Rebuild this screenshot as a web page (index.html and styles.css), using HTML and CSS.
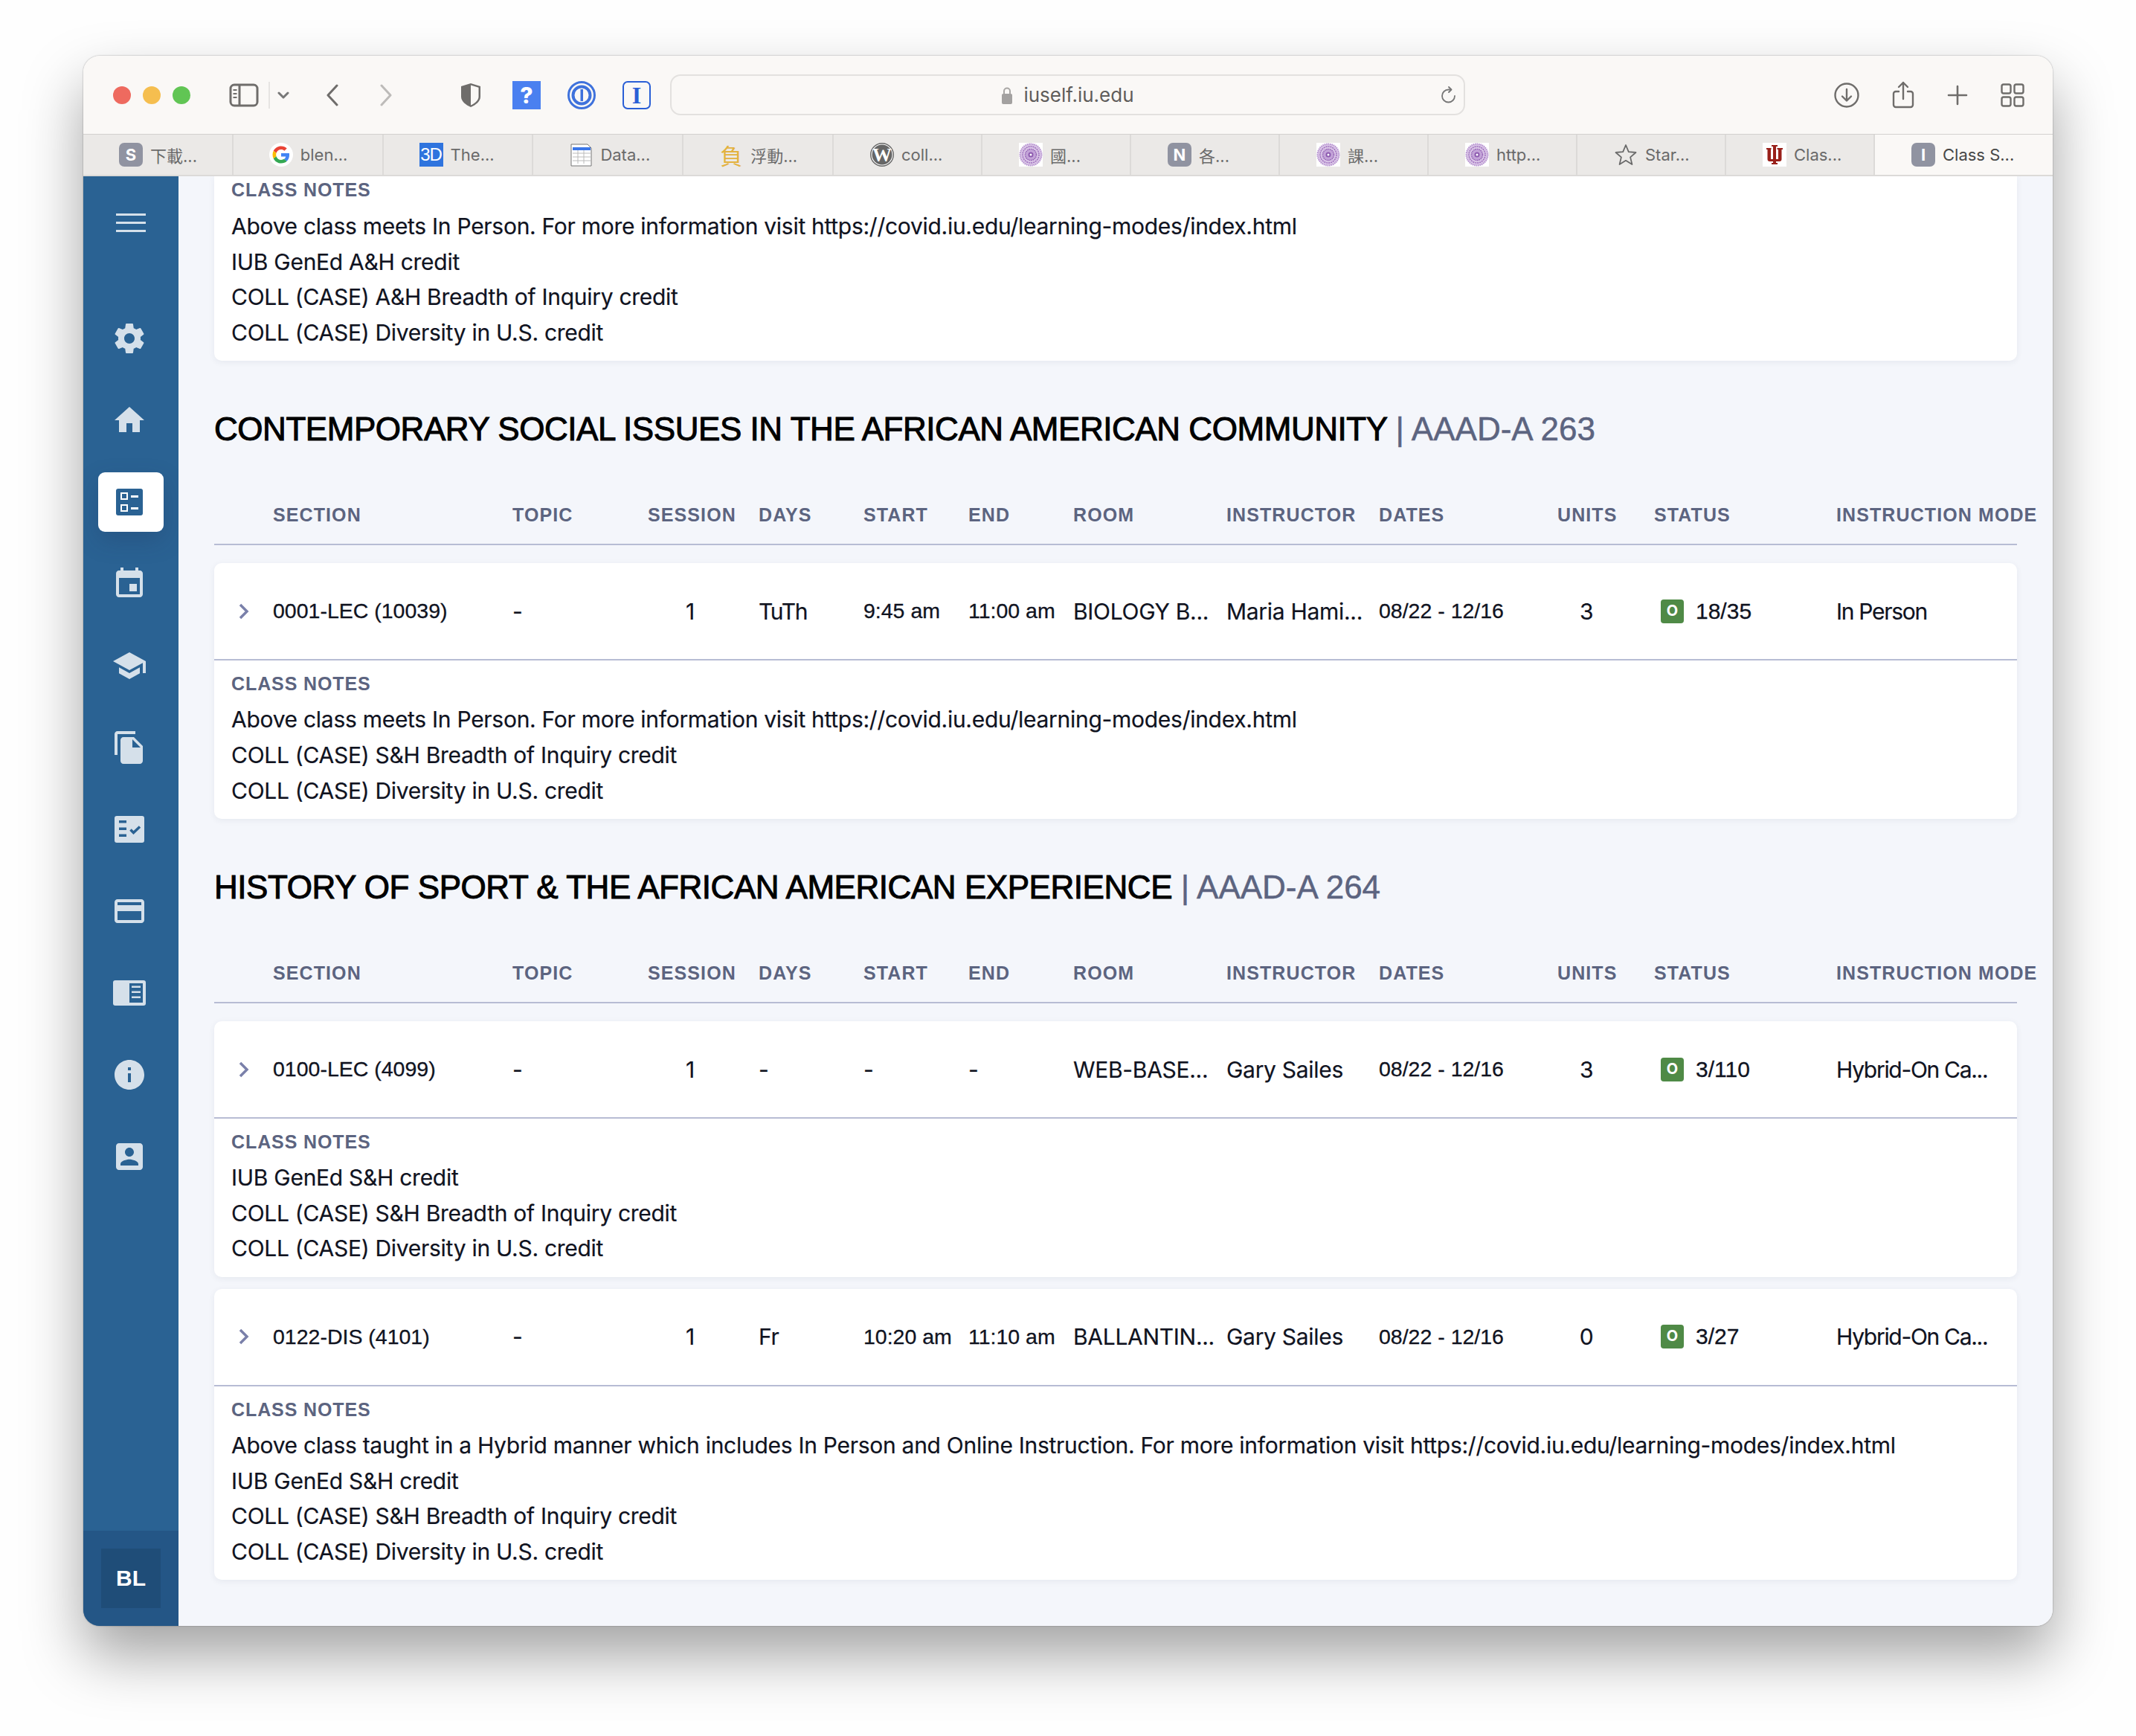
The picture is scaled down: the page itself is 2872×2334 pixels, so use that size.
FILE: index.html
```html
<!DOCTYPE html>
<html lang="en">

<head>
    <meta charset="UTF-8">
    <title>Class Search</title>
    <link rel="stylesheet" href="styles.css">
</head>

<body>
    <div class="window">

        <!-- Browser toolbar -->
        <div class="toolbar">
            <span class="light light-red"></span>
            <span class="light light-yellow"></span>
            <span class="light light-green"></span>

            <svg class="tb-sidebar" width="40" height="32" viewBox="0 0 40 32" fill="none" stroke="#6f6d6b" stroke-width="3">
                <rect x="2" y="2" width="36" height="28" rx="5" />
                <path d="M14 2v28" />
                <path d="M5.500 9h5M5.500 14h5M5.500 19h5" stroke-width="2" />
            </svg>
            <span class="tb-divider"></span>
            <svg class="tb-caret" width="16" height="12" viewBox="0 0 16 12" fill="none" stroke="#777" stroke-width="3" stroke-linecap="round" stroke-linejoin="round">
                <path d="M2 3l6 6 6-6" />
            </svg>
            <svg class="tb-back" width="18" height="30" viewBox="0 0 18 30" fill="none" stroke="#6f6d6b" stroke-width="3" stroke-linecap="round" stroke-linejoin="round">
                <path d="M15 2L3 15l12 13" />
            </svg>
            <svg class="tb-forward" width="18" height="30" viewBox="0 0 18 30" fill="none" stroke="#bdbbb9" stroke-width="3" stroke-linecap="round" stroke-linejoin="round">
                <path d="M3 2l12 13L3 28" />
            </svg>
            <svg class="tb-shield" width="28" height="34" viewBox="0 0 28 34">
                <path d="M14 1l13 4v14c0 6-6 11-13 14C7 30 1 25 1 19V5z" fill="#6f6d6b" />
                <path d="M14 3.500l10.500 3.200V19c0 4.800-4.800 9-10.500 11.500z" fill="#faf8f6" />
            </svg>
            <span class="tb-help">?</span>
            <svg class="tb-onepass" width="38" height="38" viewBox="0 0 38 38">
                <circle cx="19" cy="19" r="17.500" fill="none" stroke="#3f72dc" stroke-width="3" />
                <circle cx="19" cy="19" r="11.500" fill="none" stroke="#3f72dc" stroke-width="4" />
                <rect x="17.500" y="11" width="3.500" height="16" fill="#3f72dc" />
            </svg>
            <span class="tb-ibox">I</span>

            <div class="urlbar">
                <span></span>
                <div class="url-text">
                    <svg width="16" height="24" viewBox="0 0 16 24">
                        <path d="M4 11V6.500a4 4 0 0 1 8 0V11" fill="none" stroke="#a8a6a4" stroke-width="2" />
                        <rect x="1" y="10" width="14" height="14" rx="2" fill="#a3a1a0" />
                    </svg>
                    <span>iuself.iu.edu</span>
                </div>
                <svg class="url-reload" width="22" height="24" viewBox="0 0 22 24" fill="none" stroke="#777" stroke-width="1.800" stroke-linecap="round" stroke-linejoin="round">
                    <path d="M19 13a8.500 8.500 0 1 1-8.500-8.500H14" />
                    <path d="M11 1l3.500 3.500L11 8" />
                </svg>
            </div>

            <div class="tb-right">
                <svg width="34" height="34" viewBox="0 0 34 34" fill="none" stroke="#6f6d6b" stroke-width="2.400" stroke-linecap="round" stroke-linejoin="round">
                    <circle cx="17" cy="17" r="15.500" />
                    <path d="M17 9v15M11 18.500l6 6 6-6" />
                </svg>
                <svg width="30" height="38" viewBox="0 0 30 38" fill="none" stroke="#6f6d6b" stroke-width="2.400" stroke-linecap="round" stroke-linejoin="round">
                    <path d="M9 14H5a3 3 0 0 0-3 3v15a3 3 0 0 0 3 3h20a3 3 0 0 0 3-3V17a3 3 0 0 0-3-3h-4" />
                    <path d="M15 24V2M9 8l6-6 6 6" />
                </svg>
                <svg width="28" height="28" viewBox="0 0 28 28" fill="none" stroke="#6f6d6b" stroke-width="2.600" stroke-linecap="round">
                    <path d="M14 2v24M2 14h24" />
                </svg>
                <svg width="32" height="32" viewBox="0 0 32 32" fill="none" stroke="#6f6d6b" stroke-width="2.400">
                    <rect x="1.500" y="1.500" width="12" height="12" rx="2.500" />
                    <rect x="18.500" y="1.500" width="12" height="12" rx="2.500" />
                    <rect x="1.500" y="18.500" width="12" height="12" rx="2.500" />
                    <rect x="18.500" y="18.500" width="12" height="12" rx="2.500" />
                </svg>
            </div>
        </div>

        <!-- Browser tabs -->
        <div class="tabs">
            <div class="tab tab-wide"><span class="fav fav-gray">S</span><span>下載...</span></div>
            <div class="tab tab-wide">
                <svg class="fav" viewBox="0 0 32 32">
                    <circle cx="16" cy="16" r="16" fill="#fff" />
                    <g transform="translate(4.500 4.500) scale(.48)">
                        <path fill="#ea4335" d="M24 9.500c3.540 0 6.710 1.220 9.210 3.600l6.850-6.850C35.900 2.380 30.470 0 24 0 14.620 0 6.510 5.380 2.560 13.220l7.980 6.190C12.430 13.720 17.740 9.500 24 9.500z" />
                        <path fill="#4285f4" d="M46.980 24.550c0-1.570-.15-3.090-.38-4.550H24v9.020h12.940c-.58 2.960-2.260 5.480-4.780 7.180l7.730 6c4.510-4.180 7.090-10.360 7.090-17.650z" />
                        <path fill="#fbbc05" d="M10.530 28.590c-.48-1.450-.76-2.990-.76-4.590s.27-3.140.76-4.590l-7.980-6.190C.92 16.460 0 20.120 0 24c0 3.880.92 7.540 2.560 10.780l7.970-6.190z" />
                        <path fill="#34a853" d="M24 48c6.480 0 11.930-2.130 15.890-5.810l-7.730-6c-2.150 1.450-4.920 2.300-8.160 2.300-6.260 0-11.570-4.220-13.470-9.910l-7.980 6.190C6.510 42.620 14.620 48 24 48z" />
                    </g>
                </svg>
                <span>blen...</span>
            </div>
            <div class="tab tab-wide">
                <span class="fav fav-3d">3D</span>
                <span>The...</span>
            </div>
            <div class="tab tab-wide">
                <svg class="fav" viewBox="0 0 32 32">
                    <path d="M3 2h22l5 5v24H3z" fill="#fff" stroke="#777" />
                    <path d="M5 6h24v4H5z" fill="#3b76e8" />
                    <path d="M5 14h24M5 19h24M5 24h24M12 10v18M20 10v18" stroke="#bbb" />
                </svg>
                <span>Data...</span>
            </div>
            <div class="tab tab-wide"><span class="fav fav-gold">負</span><span>浮動...</span></div>
            <div class="tab">
                <svg class="fav" viewBox="0 0 32 32">
                    <circle cx="16" cy="16" r="15.300" fill="#fff" stroke="#666" stroke-width="1.400" />
                    <circle cx="16" cy="16" r="13.500" fill="#666" />
                    <text x="16" y="25" text-anchor="middle" class="fav-wp">W</text>
                </svg>
                <span>coll...</span>
            </div>
            <div class="tab"><svg class="fav"><use href="#seal" /></svg><span>國...</span></div>
            <div class="tab"><span class="fav fav-gray">N</span><span>各...</span></div>
            <div class="tab"><svg class="fav"><use href="#seal" /></svg><span>課...</span></div>
            <div class="tab"><svg class="fav"><use href="#seal" /></svg><span>http...</span></div>
            <div class="tab">
                <svg class="fav" viewBox="0 0 32 32">
                    <path d="M16 3l3.800 9.200 9.700.8-7.400 6.400 2.300 9.600-8.400-5.200L7.600 29 9.900 19.400 2.500 13l9.700-.8z" fill="none" stroke="#6a6a6a" stroke-width="1.800" stroke-linejoin="round" />
                </svg>
                <span>Star...</span>
            </div>
            <div class="tab">
                <svg class="fav" viewBox="0 0 32 32">
                    <rect width="32" height="32" fill="#fff" />
                    <path d="M12 3h8v2h-2v17h3V9h-1.500V7H27v2h-1.500v13c0 2-1 3-3 3H18v2h2v2h-8v-2h2v-2H9.500c-2 0-3-1-3-3V9H5V7h6.500v2H11v13h3V5h-2z" fill="#99201a" />
                </svg>
                <span>Clas...</span>
            </div>
            <div class="tab tab-active"><span class="fav fav-gray">I</span><span>Class S...</span></div>
        </div>

        <div class="app">
            <!-- Side navigation -->
            <nav class="sidebar">
                <div class="menu-btn"><span></span><span></span><span></span></div>

                <div class="side-item">
                    <svg viewBox="0 0 24 24"><path d="M19.430 12.980c.04-.32.07-.64.07-.98s-.03-.66-.07-.98l2.110-1.650c.19-.15.24-.42.12-.64l-2-3.460c-.12-.22-.39-.3-.61-.22l-2.490 1c-.52-.4-1.080-.73-1.690-.98l-.38-2.650C14.460 2.180 14.250 2 14 2h-4c-.25 0-.46.18-.49.42l-.38 2.650c-.61.25-1.170.59-1.690.98l-2.490-1c-.23-.09-.49 0-.61.22l-2 3.460c-.13.22-.07.49.12.64l2.110 1.650c-.04.32-.07.65-.07.98s.03.66.07.98l-2.110 1.650c-.19.15-.24.42-.12.64l2 3.460c.12.22.39.3.61.22l2.490-1c.52.4 1.080.73 1.690.98l.38 2.650c.03.24.24.42.49.42h4c.25 0 .46-.18.49-.42l.38-2.650c.61-.25 1.170-.59 1.690-.98l2.490 1c.23.09.49 0 .61-.22l2-3.460c.12-.22.07-.49-.12-.64l-2.110-1.650zM12 15.500c-1.930 0-3.500-1.570-3.500-3.500s1.570-3.500 3.500-3.500 3.500 1.570 3.500 3.500-1.570 3.500-3.500 3.500z" /></svg>
                </div>
                <div class="side-item">
                    <svg viewBox="0 0 24 24"><path d="M10 20v-6h4v6h5v-8h3L12 3 2 12h3v8z" /></svg>
                </div>
                <div class="side-item side-active">
                    <div class="side-pill">
                        <svg viewBox="0 0 48 48">
                            <rect x="6" y="6" width="36" height="36" rx="3" fill="#2a6293" />
                            <path d="M13 12h8v8h-8zM13 28h8v8h-8z" fill="none" stroke="#fff" stroke-width="2" />
                            <path d="M26 15h10v3H26zM26 31h10v3H26z" fill="#fff" />
                        </svg>
                    </div>
                </div>
                <div class="side-item">
                    <svg viewBox="0 0 24 24"><path d="M17 12h-5v5h5v-5zM16 1v2H8V1H6v2H5c-1.110 0-1.990.9-1.990 2L3 19c0 1.100.89 2 2 2h14c1.100 0 2-.9 2-2V5c0-1.100-.9-2-2-2h-1V1h-2zm3 18H5V8h14v11z" /></svg>
                </div>
                <div class="side-item">
                    <svg viewBox="0 0 24 24"><path d="M5 13.180v4L12 21l7-3.820v-4L12 17l-7-3.820zM12 3L1 9l11 6 9-4.910V17h2V9L12 3z" /></svg>
                </div>
                <div class="side-item">
                    <svg viewBox="0 0 24 24"><path d="M16 1H4c-1.100 0-2 .9-2 2v14h2V3h12V1zm-1 4l6 6v10c0 1.100-.9 2-2 2H7.990C6.890 23 6 22.100 6 21l.01-14c0-1.100.89-2 1.990-2h7zm-1 7h5.500L14 6.500V12z" /></svg>
                </div>
                <div class="side-item">
                    <svg viewBox="0 0 48 48">
                        <rect x="4" y="6" width="40" height="36" rx="3" />
                        <path d="M10 12h10v3.500H10zM10 21.500h10V25H10zM10 30.500h10V34H10z" fill="#2a6293" />
                        <path d="M25.500 24.500l4 4 8.500-8" fill="none" stroke="#2a6293" stroke-width="3.500" />
                    </svg>
                </div>
                <div class="side-item">
                    <svg viewBox="0 0 24 24"><path d="M20 4H4c-1.110 0-1.990.89-1.990 2L2 18c0 1.110.89 2 2 2h16c1.110 0 2-.89 2-2V6c0-1.110-.89-2-2-2zm0 14H4v-6h16v6zm0-10H4V6h16v2z" /></svg>
                </div>
                <div class="side-item">
                    <svg viewBox="0 0 48 48">
                        <rect x="2" y="7" width="44" height="34" rx="3" />
                        <path d="M24 11h18v26H24z" fill="#2a6293" />
                        <path d="M27 14.500h12v2.500H27zM27 21.500h12v2.500H27zM27 28.500h12v2.500H27z" />
                    </svg>
                </div>
                <div class="side-item">
                    <svg viewBox="0 0 24 24"><path d="M12 2C6.480 2 2 6.480 2 12s4.480 10 10 10 10-4.480 10-10S17.520 2 12 2zm1 15h-2v-6h2v6zm0-8h-2V7h2v2z" /></svg>
                </div>
                <div class="side-item">
                    <svg viewBox="0 0 24 24"><path d="M19 3H5c-1.110 0-2 .9-2 2v14c0 1.100.89 2 2 2h14c1.100 0 2-.9 2-2V5c0-1.100-.9-2-2-2zm-7 3c1.650 0 3 1.350 3 3 0 1.660-1.350 3-3 3s-3-1.340-3-3c0-1.650 1.350-3 3-3zm6 12H6v-1c0-2 4-3.100 6-3.100s6 1.100 6 3.100v1z" /></svg>
                </div>

                <div class="side-user"><span class="user-box">BL</span></div>
            </nav>

            <!-- Class list -->
            <main class="main">
                <div class="card card-cut">
                    <div class="notes">
                        <div class="notes-label">CLASS NOTES</div>
                        <p>Above class meets In Person. For more information visit https://covid.iu.edu/learning-modes/index.html</p>
                        <p>IUB GenEd A&amp;H credit</p>
                        <p>COLL (CASE) A&amp;H Breadth of Inquiry credit</p>
                        <p>COLL (CASE) Diversity in U.S. credit</p>
                    </div>
                </div>

                <h2 class="course-title">CONTEMPORARY SOCIAL ISSUES IN THE AFRICAN AMERICAN COMMUNITY <span class="course-code">| AAAD-A 263</span></h2>
                <div class="cols cols-head">
                    <span></span>
                    <span>SECTION</span><span>TOPIC</span><span class="col-session">SESSION</span><span>DAYS</span><span>START</span><span>END</span><span>ROOM</span><span>INSTRUCTOR</span><span>DATES</span><span class="col-units">UNITS</span><span>STATUS</span><span>INSTRUCTION MODE</span>
                </div>
                <div class="card">
                    <div class="cols row">
                        <svg class="chev" width="14" height="22" viewBox="0 0 14 22"><path d="M2 2l9 9-9 9" /></svg>
                        <span class="num">0001-LEC (10039)</span><span>-</span><span class="col-session">1</span><span class="tight">TuTh</span><span class="num">9:45 am</span><span class="num">11:00 am</span><span>BIOLOGY B...</span><span>Maria Hami...</span><span class="num">08/22 - 12/16</span><span class="col-units">3</span>
                        <span class="status"><span class="badge">O</span><span class="seats">18/35</span></span><span class="tight">In Person</span>
                    </div>
                    <div class="notes">
                        <div class="notes-label">CLASS NOTES</div>
                        <p>Above class meets In Person. For more information visit https://covid.iu.edu/learning-modes/index.html</p>
                        <p>COLL (CASE) S&amp;H Breadth of Inquiry credit</p>
                        <p>COLL (CASE) Diversity in U.S. credit</p>
                    </div>
                </div>

                <h2 class="course-title">HISTORY OF SPORT &amp; THE AFRICAN AMERICAN EXPERIENCE <span class="course-code">| AAAD-A 264</span></h2>
                <div class="cols cols-head">
                    <span></span>
                    <span>SECTION</span><span>TOPIC</span><span class="col-session">SESSION</span><span>DAYS</span><span>START</span><span>END</span><span>ROOM</span><span>INSTRUCTOR</span><span>DATES</span><span class="col-units">UNITS</span><span>STATUS</span><span>INSTRUCTION MODE</span>
                </div>
                <div class="card">
                    <div class="cols row">
                        <svg class="chev" width="14" height="22" viewBox="0 0 14 22"><path d="M2 2l9 9-9 9" /></svg>
                        <span class="num">0100-LEC (4099)</span><span>-</span><span class="col-session">1</span><span>-</span><span>-</span><span>-</span><span>WEB-BASE...</span><span>Gary Sailes</span><span class="num">08/22 - 12/16</span><span class="col-units">3</span>
                        <span class="status"><span class="badge">O</span><span class="seats">3/110</span></span><span class="tight">Hybrid-On Ca...</span>
                    </div>
                    <div class="notes">
                        <div class="notes-label">CLASS NOTES</div>
                        <p>IUB GenEd S&amp;H credit</p>
                        <p>COLL (CASE) S&amp;H Breadth of Inquiry credit</p>
                        <p>COLL (CASE) Diversity in U.S. credit</p>
                    </div>
                </div>
                <div class="card card-next">
                    <div class="cols row">
                        <svg class="chev" width="14" height="22" viewBox="0 0 14 22"><path d="M2 2l9 9-9 9" /></svg>
                        <span class="num">0122-DIS (4101)</span><span>-</span><span class="col-session">1</span><span>Fr</span><span class="num">10:20 am</span><span class="num">11:10 am</span><span>BALLANTIN...</span><span>Gary Sailes</span><span class="num">08/22 - 12/16</span><span class="col-units">0</span>
                        <span class="status"><span class="badge">O</span><span class="seats">3/27</span></span><span class="tight">Hybrid-On Ca...</span>
                    </div>
                    <div class="notes">
                        <div class="notes-label">CLASS NOTES</div>
                        <p>Above class taught in a Hybrid manner which includes In Person and Online Instruction. For more information visit https://covid.iu.edu/learning-modes/index.html</p>
                        <p>IUB GenEd S&amp;H credit</p>
                        <p>COLL (CASE) S&amp;H Breadth of Inquiry credit</p>
                        <p>COLL (CASE) Diversity in U.S. credit</p>
                    </div>
                </div>
            </main>
        </div>
    </div>

    <!-- Purple seal favicon, used on three tabs -->
    <svg class="defs" width="0" height="0">
        <symbol id="seal" viewBox="0 0 32 32">
            <rect width="32" height="32" fill="#fff" />
            <circle cx="16" cy="16" r="14.500" fill="#d9c4e6" stroke="#b48fce" stroke-width="2" stroke-dasharray="1.500 1" />
            <circle cx="16" cy="16" r="11" fill="none" stroke="#9d6dbd" stroke-width="1.500" stroke-dasharray="2 1" />
            <circle cx="16" cy="16" r="7.500" fill="#c3a3d8" stroke="#8e5cb0" stroke-width="1.500" stroke-dasharray="1.500 1" />
            <circle cx="16" cy="16" r="3.500" fill="#8e5cb0" />
            <circle cx="16" cy="16" r="1.500" fill="#fff" />
        </symbol>
    </svg>
</body>

</html>
```
FILE: styles.css
```css
/* Page and browser window */
body {
    margin: 0;
    height: 2334px;
    overflow: hidden;
    background-color: #fefefe;
    font-family: Inter, "Noto Sans CJK TC", sans-serif;
    color: #10131f;
}

.window {
    display: flex;
    flex-direction: column;
    width: 2648px;
    height: 2111px;
    margin: 75px 0 0 112px;
    border-radius: 22px;
    overflow: hidden;
    box-shadow: 0 40px 80px rgba(0, 0, 0, 0.36), 0 0 2px rgba(0, 0, 0, 0.4);
}

/* Toolbar */
.toolbar {
    display: flex;
    align-items: center;
    flex: 0 0 105px;
    padding: 0 38px 0 40px;
    background-color: #faf8f6;
    box-sizing: border-box;
}

.light {
    width: 24px;
    height: 24px;
    border-radius: 50%;
    margin-right: 16px;
}

.light-red {
    background-color: #ee6a5f;
}

.light-yellow {
    background-color: #f5be4f;
}

.light-green {
    background-color: #61c554;
    margin-right: 0;
}

.tb-sidebar {
    margin-left: 52px;
}

.tb-divider {
    width: 2px;
    height: 36px;
    margin-left: 13px;
    background-color: #e6e4e2;
}

.tb-caret {
    margin-left: 10px;
}

.tb-back {
    margin-left: 49px;
}

.tb-forward {
    margin-left: 54px;
}

.tb-shield {
    margin-left: 91px;
}

.tb-help {
    width: 38px;
    height: 38px;
    margin-left: 42px;
    background-color: #4a80f0;
    color: #fff;
    font-size: 30px;
    font-weight: 800;
    line-height: 38px;
    text-align: center;
}

.tb-onepass {
    margin-left: 36px;
}

.tb-ibox {
    width: 34px;
    height: 34px;
    margin-left: 36px;
    border: 2px solid #2a5fd6;
    border-radius: 7px;
    color: #2a5fd6;
    font-family: "Liberation Serif", serif;
    font-size: 32px;
    font-weight: 700;
    line-height: 34px;
    text-align: center;
}

.urlbar {
    display: grid;
    grid-template-columns: 1fr auto 1fr;
    align-items: center;
    width: 1069px;
    height: 55px;
    margin-left: 26px;
    border: 2px solid #e3e1df;
    border-radius: 14px;
    box-sizing: border-box;
}

.url-text {
    display: flex;
    align-items: center;
    gap: 14px;
    color: #5f5d5b;
    font-size: 26px;
}

.url-reload {
    justify-self: end;
    margin-right: 9px;
}

.tb-right {
    display: flex;
    align-items: center;
    gap: 44px;
    margin-left: auto;
}

/* Tabs */
.tabs {
    display: flex;
    flex: 0 0 57px;
    background-color: #ebe9e7;
    border-top: 1px solid #d3d1cf;
    border-bottom: 2px solid #dcdad8;
    box-sizing: border-box;
}

.tab {
    display: flex;
    align-items: center;
    gap: 10px;
    flex: 0 0 200px;
    padding-left: 49px;
    border-right: 2px solid #dcdad8;
    box-sizing: border-box;
    color: #6a6a6a;
    font-size: 22px;
    white-space: nowrap;
}

.tab-wide {
    flex-basis: 201.800px;
    padding-left: 48px;
}

.tab-active {
    flex: 1;
    background-color: #faf8f6;
    border-right: 0;
    color: #484848;
}

.fav {
    flex: 0 0 32px;
    width: 32px;
    height: 32px;
    line-height: 32px;
    text-align: center;
}

.fav-gray {
    background-color: #9093a1;
    border-radius: 7px;
    color: #fff;
    font-size: 22px;
    font-weight: 700;
}

.fav-gold {
    color: #e3b23f;
    font-family: "Noto Sans CJK TC", sans-serif;
    font-size: 30px;
}

.fav-3d {
    background-color: #2f74de;
    color: #fff;
    font-family: "Liberation Sans Narrow", "Liberation Sans", sans-serif;
    font-size: 24px;
    letter-spacing: -1px;
}

.fav-wp {
    fill: #fff;
    font-size: 26px;
    font-weight: 700;
    font-family: "Liberation Serif", serif;
}

.defs {
    position: absolute;
}

/* Sidebar and content */
.app {
    display: flex;
    flex: 1;
    min-height: 0;
}

.sidebar {
    display: flex;
    flex-direction: column;
    flex: 0 0 128px;
    background-color: #2a6293;
}

.menu-btn {
    display: flex;
    flex-direction: column;
    gap: 8px;
    width: 40px;
    margin: 50px 0 88px 44px;
}

.menu-btn span {
    height: 3px;
    background-color: #d5e0ea;
}

.side-item {
    display: flex;
    align-items: center;
    justify-content: center;
    height: 110px;
    padding-right: 4px;
    box-sizing: border-box;
}

.side-item svg {
    width: 48px;
    height: 48px;
    fill: #d5e0ea;
}

.side-active {
    padding-right: 0;
}

.side-pill {
    display: flex;
    align-items: center;
    justify-content: center;
    width: 88px;
    height: 80px;
    padding-right: 4px;
    box-sizing: border-box;
    border-radius: 9px;
    background-color: #fff;
    box-shadow: 0 12px 30px rgba(30, 50, 90, 0.25);
}

.side-user {
    display: flex;
    align-items: center;
    justify-content: center;
    height: 128px;
    margin-top: auto;
    background-color: #245686;
}

.user-box {
    width: 80px;
    height: 80px;
    background-color: #1f4d78;
    color: #fff;
    font-family: "Liberation Sans", sans-serif;
    font-size: 30px;
    font-weight: 700;
    line-height: 80px;
    text-align: center;
}

.main {
    flex: 1;
    min-width: 0;
    padding: 0 48px;
    overflow: hidden;
    background-color: #f4f6fb;
}

/* Set the style of the section cards */
.card {
    background-color: #fff;
    border-radius: 10px;
    box-shadow: 0 2px 8px rgba(40, 50, 90, 0.07);
}

.card-cut {
    border-radius: 0 0 10px 10px;
}

.card-next {
    margin-top: 16px;
}

.course-title {
    margin: 62px 0 0;
    color: #000;
    font-family: "Liberation Sans", sans-serif;
    font-size: 44px;
    font-weight: 400;
    line-height: 60px;
    letter-spacing: -0.450px;
    -webkit-text-stroke: 1px currentColor;
    white-space: nowrap;
}

.course-code {
    color: #5c6480;
    letter-spacing: 0;
    -webkit-text-stroke: 0.500px currentColor;
}

/* Shared columns of the head row and the section rows */
.cols {
    display: grid;
    grid-template-columns: 79px 322px 182px 149px 141px 141px 141px 206px 205px 240px 130px 245px minmax(0, 1fr);
    align-items: center;
    white-space: nowrap;
}

.cols-head {
    margin: 46px 0 24px;
    padding: 24px 0;
    border-bottom: 2px solid #b7bcd4;
    color: #5c6480;
    font-family: "Liberation Sans", sans-serif;
    font-size: 25px;
    font-weight: 700;
    line-height: 30px;
    letter-spacing: 1.100px;
}

.row {
    height: 129px;
    font-size: 30px;
    letter-spacing: -0.300px;
    -webkit-text-stroke: 0.200px currentColor;
}

/* Cells with many digits: the figures are narrower than those of Inter */
.num {
    font-family: "Liberation Sans", sans-serif;
    font-size: 28.500px;
    letter-spacing: 0;
    -webkit-text-stroke: 0.300px currentColor;
}

.seats {
    font-family: "Liberation Sans", sans-serif;
    letter-spacing: 0;
    -webkit-text-stroke: 0.300px currentColor;
}

.tight {
    letter-spacing: -1.300px;
}

.col-session {
    padding-right: 35px;
    text-align: center;
}

.col-units {
    padding-right: 52px;
    text-align: center;
}

.chev {
    margin-left: 33px;
    fill: none;
    stroke: #7a80aa;
    stroke-width: 3.500;
}

.status {
    display: flex;
    align-items: center;
    gap: 16px;
    padding-left: 9px;
}

.badge {
    width: 31px;
    height: 32px;
    border-radius: 4px;
    background-color: #4f8a46;
    color: #fff;
    font-size: 20px;
    font-weight: 700;
    line-height: 30px;
    letter-spacing: 0;
    text-align: center;
    -webkit-text-stroke: 0;
}

.notes {
    padding: 19px 23px 14px;
    border-top: 2px solid #b7bcd4;
}

.card-cut .notes {
    padding-top: 6px;
    border-top: 0;
}

.notes-label {
    margin-bottom: 13px;
    color: #5c6480;
    font-family: "Liberation Sans", sans-serif;
    font-size: 25px;
    font-weight: 700;
    line-height: 24px;
    letter-spacing: 0.900px;
}

.card-cut .notes-label {
    margin-bottom: 14px;
}

.notes p {
    margin: 0;
    font-size: 30px;
    line-height: 47.600px;
    letter-spacing: -0.280px;
    -webkit-text-stroke: 0.200px currentColor;
}
```
